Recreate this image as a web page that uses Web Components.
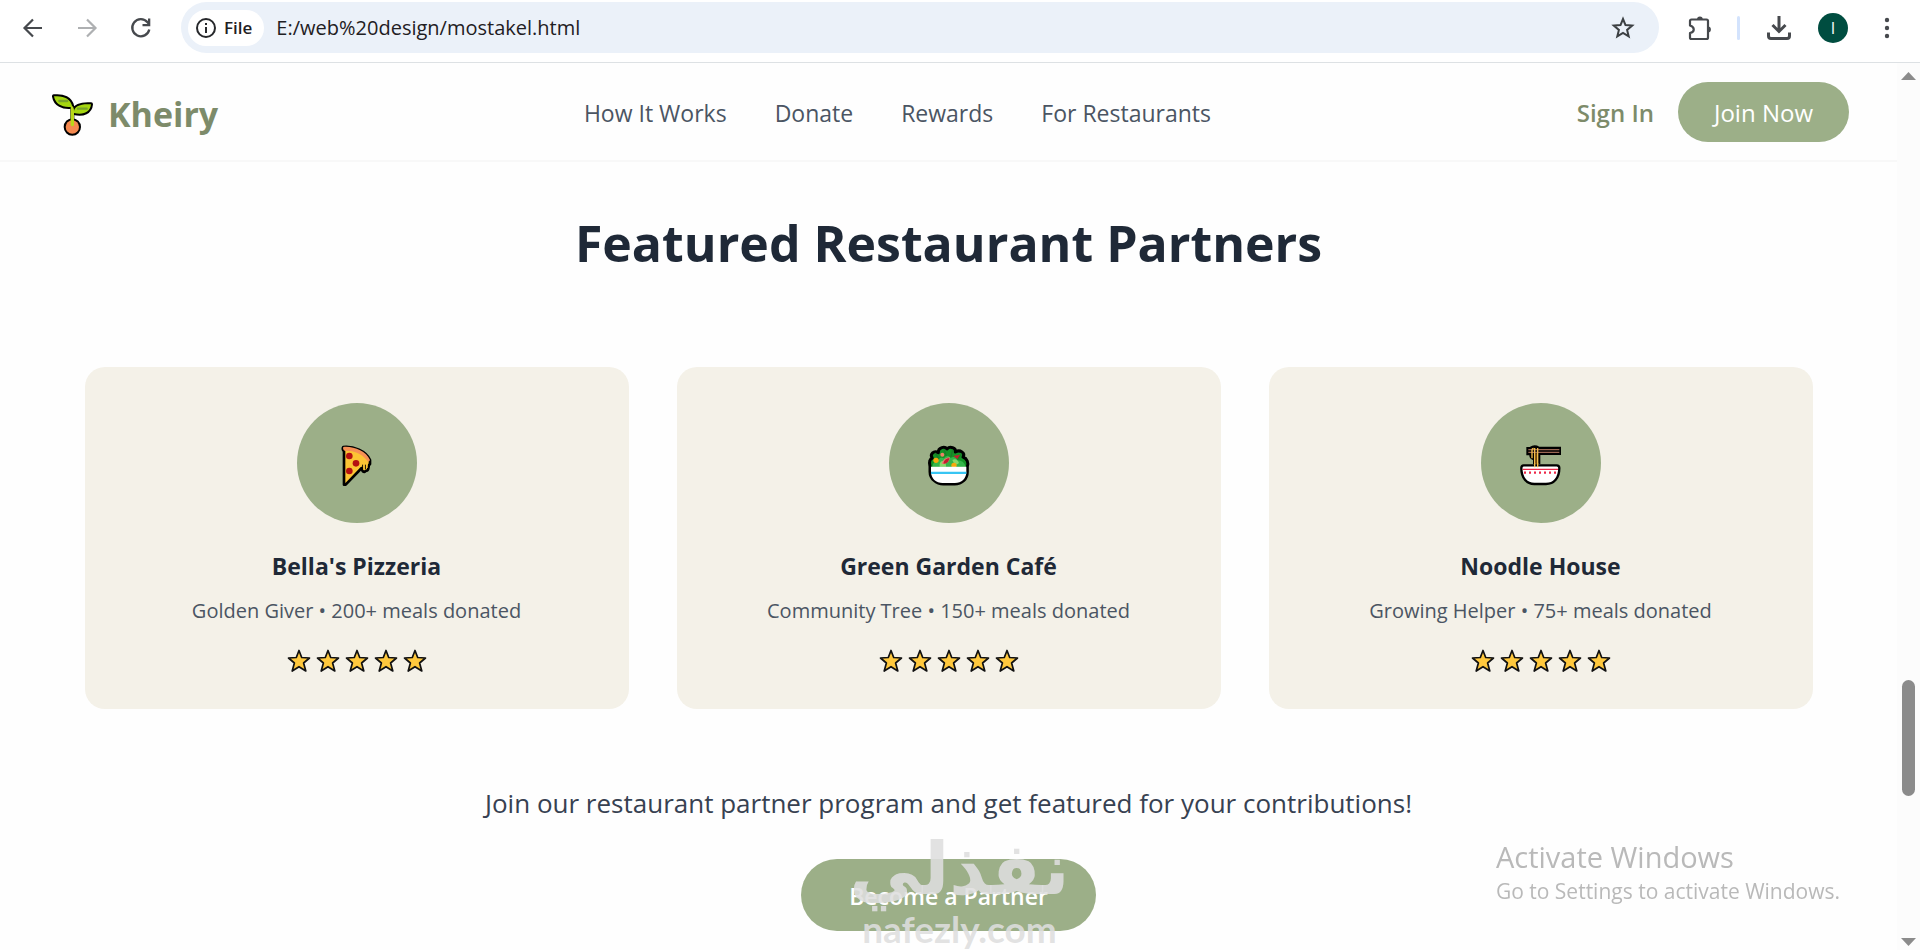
<!DOCTYPE html>
<html lang="en">
<head>
<meta charset="utf-8">
<meta name="viewport" content="width=device-width, initial-scale=1">
<title>Kheiry</title>
<style>
  html, body { height: 100%; }
  body {
    margin: 0;
    overflow: hidden;
    background: #fefefe;
    color: #1f2937;
    font-family: "Open Sans", "Noto Sans", sans-serif;
    --sage: #9caf88;
    --sage-dark: #7d8b6a;
    --cream: #f4f1e8;
  }
</style>
</head>
<body>
<browser-window>
  <browser-toolbar slot="toolbar" url="E:/web%20design/mostakel.html"></browser-toolbar>
  <site-header>
    <a slot="nav" href="#how">How It Works</a>
    <a slot="nav" href="#donate">Donate</a>
    <a slot="nav" href="#rewards">Rewards</a>
    <a slot="nav" href="#restaurants">For Restaurants</a>
  </site-header>
  <partners-section>
    <span slot="title">Featured Restaurant Partners</span>
    <partner-card icon="pizza">
      <span slot="name">Bella's Pizzeria</span>
      <span slot="meta">Golden Giver • 200+ meals donated</span>
    </partner-card>
    <partner-card icon="salad">
      <span slot="name">Green Garden Café</span>
      <span slot="meta">Community Tree • 150+ meals donated</span>
    </partner-card>
    <partner-card icon="noodles">
      <span slot="name">Noodle House</span>
      <span slot="meta">Growing Helper • 75+ meals donated</span>
    </partner-card>
    <span slot="pitch">Join our restaurant partner program and get featured for your contributions!</span>
    <pill-button slot="action" size="large">Become a Partner<site-watermark slot="overlay"></site-watermark></pill-button>
  </partners-section>
  <page-scrollbar slot="scrollbar"></page-scrollbar>
  <activation-notice slot="notice"></activation-notice>
</browser-window>

<script>
const ICONS = {
  back: `<svg viewBox="0 0 24 24"><path d="M21 12H4M12 3.500 3.500 12l8.500 8.500" fill="none" stroke="#46494d" stroke-width="2.200"/></svg>`,
  forward: `<svg viewBox="0 0 24 24"><path d="M3 12h17M12 3.500 20.500 12 12 20.500" fill="none" stroke="#aeb0b2" stroke-width="2.200"/></svg>`,
  reload: `<svg viewBox="0 0 24 24"><path d="M20.300 13.500A8.600 8.600 0 1 1 18.500 6.200L20 8" fill="none" stroke="#46494d" stroke-width="2.300"/><path d="M21.300 2.500v7.800h-7.800V8h5.500V2.500z" fill="#46494d"/></svg>`,
  info: `<svg viewBox="0 0 24 24"><circle cx="12" cy="12" r="9" fill="none" stroke="#26282b" stroke-width="2"/><path d="M12 11v6M12 7v2" stroke="#26282b" stroke-width="2"/></svg>`,
  bookmark: `<svg viewBox="0 0 24 24"><path d="m12 3 2.500 6.100 6.700.500-5.100 4.300 1.600 6.500L12 16.900l-5.700 3.500 1.600-6.500-5.100-4.300 6.700-.500z" fill="none" stroke="#3c4043" stroke-width="2"/></svg>`,
  puzzle: `<svg viewBox="0 0 26 26"><path d="M4.500 4.500h15q1.500 0 1.500 1.500v16.500q0 1.500-1.500 1.500h-15q-1.500 0-1.500-1.500v-4.500c5-1 5-6 0-7.500V6q0-1.500 1.500-1.500z" fill="none" stroke="#46494d" stroke-width="2.200" stroke-linejoin="round"/><path d="M10 4.500a2.900 2.900 0 0 1 5.800 0zM21 11.500a2.900 2.900 0 0 1 0 5.800z" fill="#46494d"/></svg>`,
  download: `<svg viewBox="0 0 26 26"><path d="M13 1v14M6.500 10l6.500 6.500L19.500 10" fill="none" stroke="#46494d" stroke-width="3"/><path d="M2.500 17.500V21q0 2.500 2.500 2.500h16q2.500 0 2.500-2.500v-3.500" fill="none" stroke="#46494d" stroke-width="3"/></svg>`,
  dots: `<svg viewBox="0 0 24 24" fill="#46494d"><circle cx="12" cy="4" r="2.200"/><circle cx="12" cy="12" r="2.200"/><circle cx="12" cy="20" r="2.200"/></svg>`,
  sprout: `<svg viewBox="36 34 126 132">
    <g stroke="#000" stroke-width="12" stroke-linejoin="round" fill="#000">
      <circle cx="97" cy="139" r="20"/>
      <path d="M42 47C70 44 92 54 97 78C68 82 46 71 42 47zM102 97C100 76 122 69 153 71C151 94 130 104 102 97z"/>
      <path d="M97 76v54"/>
    </g>
    <circle cx="97" cy="139" r="20" fill="#f5894f"/>
    <path d="M42 47C70 44 92 54 97 78C68 82 46 71 42 47zM102 97C100 76 122 69 153 71C151 94 130 104 102 97z" fill="#a5d610"/>
    <path d="M94 76C100 76 102 84 102 92V134Q97 140 92 134V80z" fill="#b8d818"/>
    <path d="M58 61h24M114 84h26" stroke="#78a22a" stroke-width="7" stroke-linecap="round"/>
  </svg>`,
  pizza: `<svg viewBox="159 147 144 144">
    <path d="M190 171C220 168 258 183 270 210V222Q266 224 265 235Q264 242 260 242T254 246Q246 246 245 234L197 284H192V184Q186 178 190 171z" fill="#fcc434" stroke="#000" stroke-width="8" stroke-linejoin="round"/>
    <path d="M190 171C220 168 258 183 270 210C267 216 263 216 260 210C243 189 220 181 194 182Q187 178 190 171z" fill="#f69055"/>
    <path d="M248 224v17M256 224v13" stroke="#000" stroke-width="3"/>
    <path d="M252 220v20M261 216v18" stroke="#fcc434" stroke-width="4"/>
    <g fill="#b51111"><circle cx="208" cy="198" r="10"/><circle cx="228" cy="220" r="10"/><circle cx="208" cy="243" r="10"/></g>
  </svg>`,
  salad: `<svg viewBox="165 147 144 144">
    <path d="M180 230C176 215 180 206 187 205C178 192 192 180 205 188C204 171 225 168 231 177C240 167 259 174 256 186C270 177 287 189 279 201C292 205 296 219 292 230V245C292 268 275 282 254 282H220C199 282 180 266 180 245z" fill="#159426" stroke="#000" stroke-width="9" stroke-linejoin="round"/>
    <path d="M196 190l13 20M223 180l6 20M248 180l-5 20M274 193l-15 19" stroke="#1c7a2a" stroke-width="4" stroke-linecap="round"/>
    <path d="M187 230Q190 213 202 217Q207 198 222 205Q231 190 242 204Q255 195 263 211Q281 211 287 230z" fill="#35b64a"/>
    <path d="M209 230q-2-17 11-18 9 4 8 18zM247 210q13-7 20 9-7 8-15 1z" fill="#88d86a"/>
    <g fill="#f7a80d"><circle cx="198" cy="211" r="8"/><circle cx="252" cy="226" r="8"/></g>
    <path d="M215 221q5-18 25-19-2 20-22 20z" fill="#e97b6f"/>
    <path d="M220 220q4-15 18-16-1 16-16 17zM250 198l20-4-8 13z" fill="#c51d2f"/>
    <circle cx="217" cy="194" r="6" fill="#ef8065"/>
    <path d="M183 230h106v15c0 20-14 34-35 34h-36c-20 0-35-14-35-34z" fill="#fff"/>
    <path d="M183 245h106v7H183z" fill="#38c5f3"/>
  </svg>`,
  noodles: `<svg viewBox="171 147 144 144">
    <path d="M199 171h10q14-10 29-1h65v25h-62v27H219v-12q-11-3-11-14h-9z" fill="#000"/>
    <path d="M205 179h93M205 187h93" stroke="#9b6753" stroke-width="4"/>
    <path d="M216 205v-25q0-5 5-5M224 230v-56M233 230v-56" fill="none" stroke="#f4bd4b" stroke-width="4"/>
    <path d="M228 190v40" stroke="#a66d19" stroke-width="4"/>
    <path d="M191 226h99Q298 226 298 234C298 264 282 282 258 282H223C200 282 184 264 184 234Q184 226 191 226z" fill="#fff" stroke="#000" stroke-width="7"/>
    <path d="M188 238h106" stroke="#ed2849" stroke-width="4"/>
    <path d="M192 248h101" stroke="#ed2849" stroke-width="7" stroke-dasharray="6 9"/>
    <path d="M224 220v12M233 220v12" stroke="#f4bd4b" stroke-width="4"/>
  </svg>`,
  star: `<svg viewBox="0 0 24 24"><path d="M12 1.500 14.700 8.500 22.500 9 16.600 14 18.800 22 12 17.700 5.200 22 7.400 14 1.500 9 9.300 8.500z" fill="#ffc83d" stroke="#111" stroke-width="1.700" stroke-linejoin="round"/></svg>`
};

class GlyphIcon extends HTMLElement {
  constructor() {
    super();
    this.attachShadow({ mode: "open" });
  }

  connectedCallback() {
    this.shadowRoot.innerHTML = `
    <style>
      :host { display: inline-block; width: 24px; height: 24px; flex: none; }
      svg { display: block; width: 100%; height: 100%; }
    </style>
    ${ICONS[this.getAttribute("name")]}`;
    this.setAttribute("aria-hidden", "true");
  }
}

class PillButton extends HTMLElement {
  constructor() {
    super();
    this.attachShadow({ mode: "open" });
  }

  static get styles() {
    return `
    :host {
      display: inline-block;
      position: relative;
    }
    button {
      display: block;
      border: 0;
      border-radius: 36px;
      padding: 15px 36px 13px;
      background: var(--sage);
      color: #fff;
      font: 500 24px/32px "Open Sans", "Noto Sans", sans-serif;
      cursor: pointer;
    }
    :host([size="large"]) button {
      padding: 21px 48px 19px;
      font-size: 23px;
      font-weight: 600;
    }
    `;
  }

  connectedCallback() {
    this.shadowRoot.innerHTML = `
    <style>${PillButton.styles}</style>
    <button type="button"><slot></slot></button>
    <slot name="overlay"></slot>`;
  }
}

class BrowserToolbar extends HTMLElement {
  constructor() {
    super();
    this.attachShadow({ mode: "open" });
  }

  static get styles() {
    return `
    :host {
      display: flex;
      align-items: center;
      padding: 2px 6px 9px;
      background: #fff;
      border-bottom: 1px solid #dde1e4;
    }
    button {
      display: flex;
      align-items: center;
      justify-content: center;
      border: 0;
      padding: 0;
      background: none;
      color: #1f2023;
      font: inherit;
    }
    .tool {
      width: 54px;
      height: 48px;
      flex: none;
    }
    .large {
      width: 26px;
      height: 26px;
    }
    .address {
      display: flex;
      align-items: center;
      flex: 1;
      box-sizing: border-box;
      height: 51px;
      margin: 0 14px 0 13px;
      padding: 0 24px 0 7px;
      border-radius: 26px;
      background: #ebf1f9;
    }
    .chip {
      gap: 6px;
      height: 36px;
      padding: 0 12px 0 6px;
      border-radius: 18px;
      background: #fff;
      font-size: 17px;
      font-weight: 600;
    }
    input {
      flex: 1;
      min-width: 0;
      border: 0;
      padding: 0 12px;
      outline: 0;
      background: none;
      color: #1f2023;
      font: 20px/28px "Open Sans", "Noto Sans", sans-serif;
    }
    .divider {
      width: 3px;
      height: 24px;
      margin: 0 12px 0 10px;
      border-radius: 2px;
      background: #d3e3fd;
    }
    .avatar {
      width: 30px;
      height: 30px;
      border-radius: 50%;
      background: #004d40;
      color: #fff;
      font-size: 16px;
      line-height: 30px;
    }
    `;
  }

  connectedCallback() {
    this.shadowRoot.innerHTML = `
    <style>${BrowserToolbar.styles}</style>
    <button class="tool" type="button" aria-label="Back"><glyph-icon name="back"></glyph-icon></button>
    <button class="tool" type="button" aria-label="Forward"><glyph-icon name="forward"></glyph-icon></button>
    <button class="tool" type="button" aria-label="Reload"><glyph-icon name="reload"></glyph-icon></button>
    <div class="address">
      <button class="chip" type="button"><glyph-icon name="info"></glyph-icon>File</button>
      <input type="text" aria-label="Address" value="${this.getAttribute("url")}">
      <button type="button" aria-label="Bookmark"><glyph-icon name="bookmark"></glyph-icon></button>
    </div>
    <button class="tool" type="button" aria-label="Extensions"><glyph-icon class="large" name="puzzle"></glyph-icon></button>
    <div class="divider"></div>
    <button class="tool" type="button" aria-label="Downloads"><glyph-icon class="large" name="download"></glyph-icon></button>
    <button class="tool" type="button" aria-label="Profile"><span class="avatar">I</span></button>
    <button class="tool" type="button" aria-label="Menu"><glyph-icon name="dots"></glyph-icon></button>`;
  }
}

class SiteHeader extends HTMLElement {
  constructor() {
    super();
    this.attachShadow({ mode: "open" });
  }

  static get styles() {
    return `
    :host { display: block; }
    header {
      display: flex;
      align-items: center;
      justify-content: space-between;
      padding: 19px 48px 18px;
      background: #fefefe;
      border-bottom: 2px solid #f8f8f8;
    }
    a {
      text-decoration: none;
    }
    .logo {
      display: flex;
      align-items: center;
      gap: 14px;
      padding: 4px 0 0 4px;
      color: var(--sage-dark);
      font-size: 34px;
      font-weight: 700;
      line-height: 44px;
    }
    .logo glyph-icon {
      width: 42px;
      height: 44px;
    }
    nav {
      display: flex;
      gap: 48px;
      padding-top: 2px;
    }
    ::slotted(a) {
      color: #4b5563;
      font-size: 23px;
      line-height: 32px;
      text-decoration: none;
    }
    .account {
      display: flex;
      align-items: center;
      gap: 24px;
    }
    .sign-in {
      padding-top: 2px;
      color: var(--sage-dark);
      font-size: 24px;
      font-weight: 600;
      line-height: 32px;
    }
    `;
  }

  connectedCallback() {
    this.shadowRoot.innerHTML = `
    <style>${SiteHeader.styles}</style>
    <header>
      <a class="logo" href="#top"><glyph-icon name="sprout"></glyph-icon>Kheiry</a>
      <nav><slot name="nav"></slot></nav>
      <div class="account">
        <a class="sign-in" href="#sign-in">Sign In</a>
        <pill-button>Join Now</pill-button>
      </div>
    </header>`;
  }
}

class PartnerCard extends HTMLElement {
  constructor() {
    super();
    this.attachShadow({ mode: "open" });
  }

  static get styles() {
    return `
    :host {
      display: flex;
      flex-direction: column;
      align-items: center;
      padding: 36px;
      border-radius: 20px;
      background: var(--cream);
      text-align: center;
    }
    .badge {
      display: flex;
      align-items: center;
      justify-content: center;
      width: 120px;
      height: 120px;
      border-radius: 50%;
      background: var(--sage);
    }
    .badge glyph-icon {
      width: 48px;
      height: 48px;
    }
    h3 {
      margin: 27px 0 15px;
      font-size: 23px;
      font-weight: 700;
      line-height: 32px;
    }
    p {
      margin: 0 0 24px;
      color: #4b5563;
      font-size: 20px;
      line-height: 28px;
    }
    .stars {
      display: flex;
      gap: 5px;
    }
    `;
  }

  connectedCallback() {
    this.shadowRoot.innerHTML = `
    <style>${PartnerCard.styles}</style>
    <div class="badge"><glyph-icon name="${this.getAttribute("icon")}"></glyph-icon></div>
    <h3><slot name="name"></slot></h3>
    <p><slot name="meta"></slot></p>
    <div class="stars" role="img" aria-label="5 out of 5">
      ${`<glyph-icon name="star"></glyph-icon>`.repeat(5)}
    </div>`;
  }
}

class PartnersSection extends HTMLElement {
  constructor() {
    super();
    this.attachShadow({ mode: "open" });
  }

  static get styles() {
    return `
    :host { display: block; }
    section {
      max-width: 1728px;
      margin: 0 auto;
      padding: 48px;
      text-align: center;
    }
    h2 {
      margin: 0 0 91px;
      font-size: 50px;
      font-weight: 700;
      line-height: 66px;
    }
    .grid {
      display: grid;
      grid-template-columns: repeat(3, 1fr);
      gap: 48px;
    }
    p {
      margin: 76px 0 38px;
      color: #374151;
      font-size: 26px;
      line-height: 36px;
    }
    `;
  }

  connectedCallback() {
    this.shadowRoot.innerHTML = `
    <style>${PartnersSection.styles}</style>
    <section>
      <h2><slot name="title"></slot></h2>
      <div class="grid"><slot></slot></div>
      <p><slot name="pitch"></slot></p>
      <slot name="action"></slot>
    </section>`;
  }
}

class SiteWatermark extends HTMLElement {
  constructor() {
    super();
    this.attachShadow({ mode: "open" });
  }

  connectedCallback() {
    // floats over the button
    this.shadowRoot.innerHTML = `
    <style>
      :host {
        position: absolute;
        inset: -32px 0 auto 22px;
        display: flex;
        flex-direction: column;
        align-items: center;
        color: rgba(222, 222, 222, 0.88);
        pointer-events: none;
      }
      .arabic {
        font: 700 72px/84px "DejaVu Sans", sans-serif;
      }
      .latin {
        font: 700 37px/36px Lato, sans-serif;
      }
    </style>
    <span class="arabic" lang="ar" dir="rtl">نفذلي</span>
    <span class="latin">nafezly.com</span>`;
  }
}

class ActivationNotice extends HTMLElement {
  constructor() {
    super();
    this.attachShadow({ mode: "open" });
  }

  connectedCallback() {
    this.shadowRoot.innerHTML = `
    <style>
      :host { display: block; color: #b9b9b9; }
      .title { font-size: 29px; line-height: 40px; }
      .hint { font-size: 21px; line-height: 28px; }
    </style>
    <div class="title">Activate Windows</div>
    <div class="hint">Go to Settings to activate Windows.</div>`;
  }
}

class PageScrollbar extends HTMLElement {
  constructor() {
    super();
    this.attachShadow({ mode: "open" });
  }

  connectedCallback() {
    this.shadowRoot.innerHTML = `
    <style>
      :host {
        display: flex;
        flex-direction: column;
        align-items: center;
        box-sizing: border-box;
        width: 23px;
        padding: 9px 4px 4px;
        background: #fcfcfc;
      }
      .arrow {
        width: 15px;
        height: 8px;
        background: #8b8b8b;
        clip-path: polygon(50% 0, 100% 100%, 0 100%);
      }
      .arrow.down {
        clip-path: polygon(0 0, 100% 0, 50% 100%);
      }
      .before { flex: 600; }
      .thumb {
        flex: 116;
        width: 13px;
        border-radius: 7px;
        background: #8b8b8b;
      }
      .after { flex: 142; }
    </style>
    <div class="arrow"></div>
    <div class="before"></div>
    <div class="thumb"></div>
    <div class="after"></div>
    <div class="arrow down"></div>`;
  }
}

class BrowserWindow extends HTMLElement {
  constructor() {
    super();
    this.attachShadow({ mode: "open" });
  }

  static get styles() {
    return `
    :host {
      display: flex;
      flex-direction: column;
      height: 100%;
    }
    .viewport {
      display: flex;
      flex: 1;
      min-height: 0;
    }
    main {
      flex: 1;
      min-width: 0;
      overflow: hidden;
    }
    ::slotted([slot="notice"]) {
      position: fixed;
      right: 80px;
      bottom: 45px;
    }
    `;
  }

  connectedCallback() {
    this.shadowRoot.innerHTML = `
    <style>${BrowserWindow.styles}</style>
    <slot name="toolbar"></slot>
    <div class="viewport">
      <main><slot></slot></main>
      <slot name="scrollbar"></slot>
    </div>
    <slot name="notice"></slot>`;
  }
}

customElements.define("glyph-icon", GlyphIcon);
customElements.define("pill-button", PillButton);
customElements.define("browser-toolbar", BrowserToolbar);
customElements.define("site-header", SiteHeader);
customElements.define("partner-card", PartnerCard);
customElements.define("partners-section", PartnersSection);
customElements.define("site-watermark", SiteWatermark);
customElements.define("activation-notice", ActivationNotice);
customElements.define("page-scrollbar", PageScrollbar);
customElements.define("browser-window", BrowserWindow);
</script>
</body>
</html>
